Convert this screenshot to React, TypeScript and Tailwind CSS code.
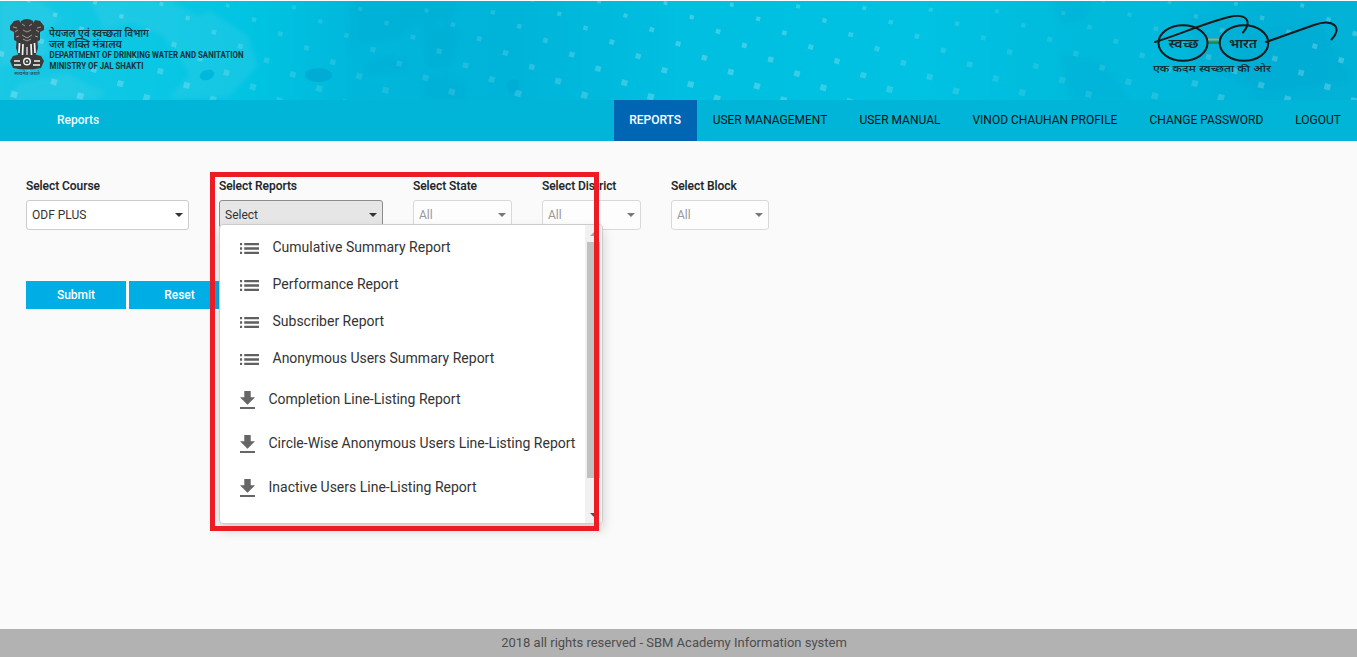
import React from "react";

const dots: { x: number; y: number; s: number; o: number }[] = [];
for (let j = -14; j <= 18; j++) {
  for (let i = -12; i <= 22; i++) {
    const x = 294 + i * 66.3 + j * 26.3;
    const y = 6.3 + i * 1.65 + j * 14.1;
    if (x > -5 && x < 1362 && y > -4 && y < 103) {
      const bright = 0.5 + 0.5 * Math.cos(((x - 720) / 1357) * Math.PI * 4);
      dots.push({ x, y, s: 3.8 + y * 0.027, o: 0.12 + bright * 0.16 });
    }
  }
}

function Backdrop() {
  return (
    <svg className="absolute inset-0 h-full w-full" viewBox="0 0 1357 99" preserveAspectRatio="none">
      <defs>
        <linearGradient id="sky" x1="0" x2="1" y1="0" y2="0">
          <stop offset="0" stopColor="#18c8e4" />
          <stop offset="0.12" stopColor="#09c7e4" />
          <stop offset="0.19" stopColor="#00c3e2" />
          <stop offset="0.27" stopColor="#00b6da" />
          <stop offset="0.38" stopColor="#00b4d9" />
          <stop offset="0.5" stopColor="#00bfe0" />
          <stop offset="0.68" stopColor="#00c2e2" />
          <stop offset="0.8" stopColor="#00badc" />
          <stop offset="0.87" stopColor="#00b8db" />
          <stop offset="0.94" stopColor="#00b0d6" />
          <stop offset="1" stopColor="#02b2d7" />
        </linearGradient>
        <filter id="soft" x="-10%" y="-10%" width="120%" height="120%">
          <feGaussianBlur stdDeviation="2.5" />
        </filter>
      </defs>
      <rect width="1357" height="99" fill="url(#sky)" />
      <g fill="#5fd5ea" opacity="0.2" filter="url(#soft)">
        <path d="M0 0h40l22 18-20 14 8 20-50 14z" />
        <path d="M90 0h80l30 16-38 18-30-12-28 6z" />
        <path d="M160 30l50-20 38 25 10 30-30 32h-60l22-24z" />
        <path d="M20 82l46-10 40 20-10 7H10z" />
      </g>
      <g fill="#009fcb" opacity="0.17" filter="url(#soft)">
        <path d="M350 0h110l-8 20-34 2-20 16-36 4-14 12z" />
        <path d="M420 10l20 16 10-8 12 20-12 28-24 4z" />
        <path d="M366 62l24-8 22 10-18 8-28 2z" />
        <path d="M422 78l24-4 22 10-4 15h-40z" />
        <path d="M1052 0h40l-8 20-22 4z M1060 52l40 8 30 39h-60z M1190 10l60 20 70-10 30 60-90 10-70-30z" />
      </g>
      <ellipse cx="318.500" cy="74" rx="13.500" ry="7" fill="#00acd4" />
      <ellipse cx="207" cy="74" rx="7.500" ry="5" fill="#00b7dc" transform="rotate(-20 207 74)" />
      <ellipse cx="513" cy="85" rx="6" ry="7" fill="#00a9d2" opacity="0.6" />
      <g fill="#d5f5fa">
        {dots.map((d, k) => (
          <rect
            key={k}
            x={d.x - d.s / 2}
            y={d.y - d.s / 2}
            width={d.s}
            height={d.s}
            opacity={d.o}
            transform={`rotate(15 ${d.x} ${d.y})`}
          />
        ))}
      </g>
    </svg>
  );
}

function Emblem() {
  return (
    <svg className="h-[52px] w-[36px] shrink-0" viewBox="0 0 36 52">
      <g fill="#3f3a3a">
        <path d="M12 3q6-4 12 0l2 5-1 10-3 5h-8l-3-5-1-10z" />
        <path d="M1 8l4-5 5-1 2 4v14l-3 4-4-2v-8l-4-2z" />
        <path d="M35 8l-4-5-5-1-2 4v14l3 4 4-2v-8l4-2z" />
        <path d="M8 18h20l1 12-3 9H10l-3-9z" />
        <path d="M4 38q14-5 28 0l3 5-3 7q-14 3-28 0l-3-7z" />
      </g>
      <g stroke="#eef6f7" fill="none">
        <path d="M10.500 25l-.5 10M14 26l-.5 11M22 26l.5 11M25.500 25l.5 10" strokeWidth="1.700" />
        <path d="M18 29v8" strokeWidth="1.200" />
        <path d="M5 43h6M25 43h6M5 47h7M24 47h7" strokeWidth="1.700" />
        <circle cx="18" cy="43.500" r="3.300" strokeWidth="1.400" />
      </g>
      <g stroke="#a9a5a5" strokeWidth="0.900" fill="none">
        <path d="M13 6l3 2M23 6l-3 2M14 12l4 2 4-2M13 17l5 3 5-3M14 21l4 2 4-2M4 9l4 1M32 9l-4 1M6 14l3-2M30 14l-3-2M7 19l3-1M29 19l-3-1" />
      </g>
      <circle cx="18" cy="43.500" r="1" fill="#eef6f7" />
    </svg>
  );
}

function Glasses() {
  return (
    <svg className="absolute left-[1150px] top-[10px] h-[66px] w-[194px]" viewBox="1150 10 194 66">
      <path d="M1208 39.500h11" stroke="#e8962e" strokeWidth="1.700" />
      <path d="M1208 42.700h11" stroke="#138a52" strokeWidth="2.200" />
      <g fill="none" stroke="#15191b" strokeWidth="2" strokeLinecap="round">
        <ellipse cx="1183" cy="43" rx="24.500" ry="17.800" />
        <ellipse cx="1244" cy="43" rx="24.300" ry="17.800" />
        <path d="M1155 42C1175 36 1205 23 1229 17C1246 13 1253 21 1243 32.500" />
        <path d="M1266 42L1314 25C1334 18 1343 28 1331.500 39.500" />
      </g>
      <g fill="#14262c" fontFamily="'Noto Sans', sans-serif">
        <text x="1168.500" y="48" fontSize="12" fontWeight="600" textLength="30" lengthAdjust="spacingAndGlyphs">स्वच्छ</text>
        <text x="1229" y="48" fontSize="12" fontWeight="600" textLength="28" lengthAdjust="spacingAndGlyphs">भारत</text>
        <text x="1153" y="71.500" fontSize="9.500" fontWeight="500" textLength="118" lengthAdjust="spacingAndGlyphs">एक कदम स्वच्छता की ओर</text>
      </g>
    </svg>
  );
}

function Field({ label, value, width, state = "normal" }: { label: string; value: string; width: string; state?: "normal" | "open" | "disabled" }) {
  const box =
    state === "open"
      ? "border-[#8c8c8c] bg-[#e6e6e6] text-[#333]"
      : state === "disabled"
        ? "border-[#d9d9d9] bg-[#fdfdfd] text-[#999]"
        : "border-[#ccc] bg-white text-[#333]";
  return (
    <div className={`${width} shrink-0`}>
      <div className="h-[21px] whitespace-nowrap text-[12px] font-medium leading-[14px] tracking-[-0.05px] text-[#212529] [-webkit-text-stroke:0.1px_#212529]">{label}</div>
      <div className={`flex h-[30px] items-center justify-between rounded-[3px] border pl-[5px] pr-[5px] text-[12px] ${box}`}>
        <span>{value}</span>
        <span className={`h-0 w-0 border-x-4 border-t-4 border-x-transparent ${state === "disabled" ? "border-t-[#777]" : "border-t-[#333]"}`} />
      </div>
    </div>
  );
}

function ListIcon() {
  return (
    <svg className="mr-[13.500px] mt-[2px] h-[11px] w-[19px] shrink-0" viewBox="0 0 18 10.400" preserveAspectRatio="none" fill="#606060">
      <path d="M0 0h2v2.200H0zM4 0h14v2.200H4zM0 4.100h2v2.200H0zM4 4.100h14v2.200H4zM0 8.200h2v2.200H0zM4 8.200h14v2.200H4z" />
    </svg>
  );
}

function DownloadIcon() {
  return (
    <svg className="mr-[13.500px] mt-[2px] h-[18px] w-[15px] shrink-0" viewBox="0 0 14 17" preserveAspectRatio="none" fill="#666">
      <path d="M14 6h-4V0H4v6H0l7 7 7-7zM0 15v2h14v-2H0z" />
    </svg>
  );
}

const summaries = ["Cumulative Summary Report", "Performance Report", "Subscriber Report", "Anonymous Users Summary Report"];
const listings = ["Completion Line-Listing Report", "Circle-Wise Anonymous Users Line-Listing Report", "Inactive Users Line-Listing Report"];
const menu = ["USER MANAGEMENT", "USER MANUAL", "VINOD CHAUHAN PROFILE", "CHANGE PASSWORD", "LOGOUT"];

function ReportMenu() {
  return (
    <div className="absolute left-[219px] top-[224px] flex h-[300px] w-[384px] overflow-hidden rounded-[4px] border border-[#ccc] bg-white text-[14px] text-[#333] shadow-[0_6px_12px_rgba(0,0,0,0.175)]">
      <div className="flex-1 whitespace-nowrap pl-[20px] pt-[4px]">
        {summaries.map((s) => (
          <div key={s} className="flex h-[37px] items-center">
            <ListIcon />
            <span className="pb-[1px]">{s}</span>
          </div>
        ))}
        {listings.map((s) => (
          <div key={s} className="flex h-[44px] items-center">
            <DownloadIcon />
            <span>{s}</span>
          </div>
        ))}
      </div>
      <div className="flex w-[17px] flex-col items-center bg-[#f1f1f1]">
        <div className="flex h-[17px] items-center">
          <span className="h-0 w-0 border-x-4 border-b-4 border-x-transparent border-b-[#a3a3a3]" />
        </div>
        <div className="h-[236px] w-[13px] bg-[#c1c1c1]" />
        <div className="mt-auto flex h-[17px] items-center">
          <span className="h-0 w-0 border-x-4 border-t-4 border-x-transparent border-t-[#505050]" />
        </div>
      </div>
    </div>
  );
}

export default function App() {
  return (
    <div className="relative flex h-[657px] w-[1357px] flex-col overflow-hidden bg-[#fafafa] font-['Roboto',sans-serif]">
      <header className="relative mt-px h-[99px] shrink-0 overflow-hidden">
        <Backdrop />
        <div className="relative flex pl-[9px] pt-[17px]">
          <div className="w-[36px]">
            <Emblem />
            <div className="mt-[-1px] text-center font-['Noto_Sans',sans-serif] text-[5px] font-semibold leading-[8px] text-[#2a5660]">सत्यमेव जयते</div>
          </div>
          <svg className="h-[60px] w-[210px] overflow-visible" viewBox="45 18 210 60" fill="#16323a">
            <g fontFamily="'Noto Sans', sans-serif" fontSize="10.500" fontWeight="600">
              <text x="49" y="36.500" textLength="100" lengthAdjust="spacingAndGlyphs">पेयजल एवं स्वच्छता विभाग</text>
              <text x="49" y="47.500" textLength="73" lengthAdjust="spacingAndGlyphs">जल शक्ति मंत्रालय</text>
            </g>
            <g fontFamily="Roboto, sans-serif" fontSize="9" fontWeight="700">
              <text x="49.500" y="58" textLength="194" lengthAdjust="spacingAndGlyphs">DEPARTMENT OF DRINKING WATER AND SANITATION</text>
              <text x="49.500" y="69" textLength="94" lengthAdjust="spacingAndGlyphs">MINISTRY OF JAL SHAKTI</text>
            </g>
          </svg>
        </div>
      </header>
      <nav className="flex h-[41px] shrink-0 items-center justify-between bg-[#00b5d7] pl-[57px] text-[12px]">
        <span className="pb-px font-medium text-[#f0fbfd]">Reports</span>
        <div className="flex h-full items-center text-[#111]">
          <span className="flex h-full w-[83px] items-center justify-center bg-[#0066b3] pb-px font-medium text-white">REPORTS</span>
          {menu.map((m) => (
            <span key={m} className="px-[16px] pb-px">{m}</span>
          ))}
        </div>
      </nav>
      <main className="flex-1 pl-[26px] pt-[38px]">
        <div className="flex gap-[30px]">
          <Field label="Select Course" value="ODF PLUS" width="w-[163px]" />
          <Field label="Select Reports" value="Select" width="w-[164px]" state="open" />
          <Field label="Select State" value="All" width="w-[99px]" state="disabled" />
          <Field label="Select District" value="All" width="w-[99px]" state="disabled" />
          <Field label="Select Block" value="All" width="w-[98px]" state="disabled" />
        </div>
        <div className="mt-[51px] flex gap-[3px] text-[12px] font-medium text-white">
          <button className="h-[28px] w-[100px] bg-[#00aee6]">Submit</button>
          <button className="h-[28px] w-[101px] bg-[#00aee6]">Reset</button>
        </div>
      </main>
      <footer className="flex h-[28px] shrink-0 items-center justify-center bg-[#b2b2b2] pr-[9px] text-[13px] text-[#4d4d4d]">
        2018 all rights reserved - SBM Academy Information system
      </footer>
      <Glasses />
      <ReportMenu />
      <div className="pointer-events-none absolute left-[210px] top-[172px] h-[359px] w-[389px] border-[5px] border-[#ed1c24]" />
    </div>
  );
}
